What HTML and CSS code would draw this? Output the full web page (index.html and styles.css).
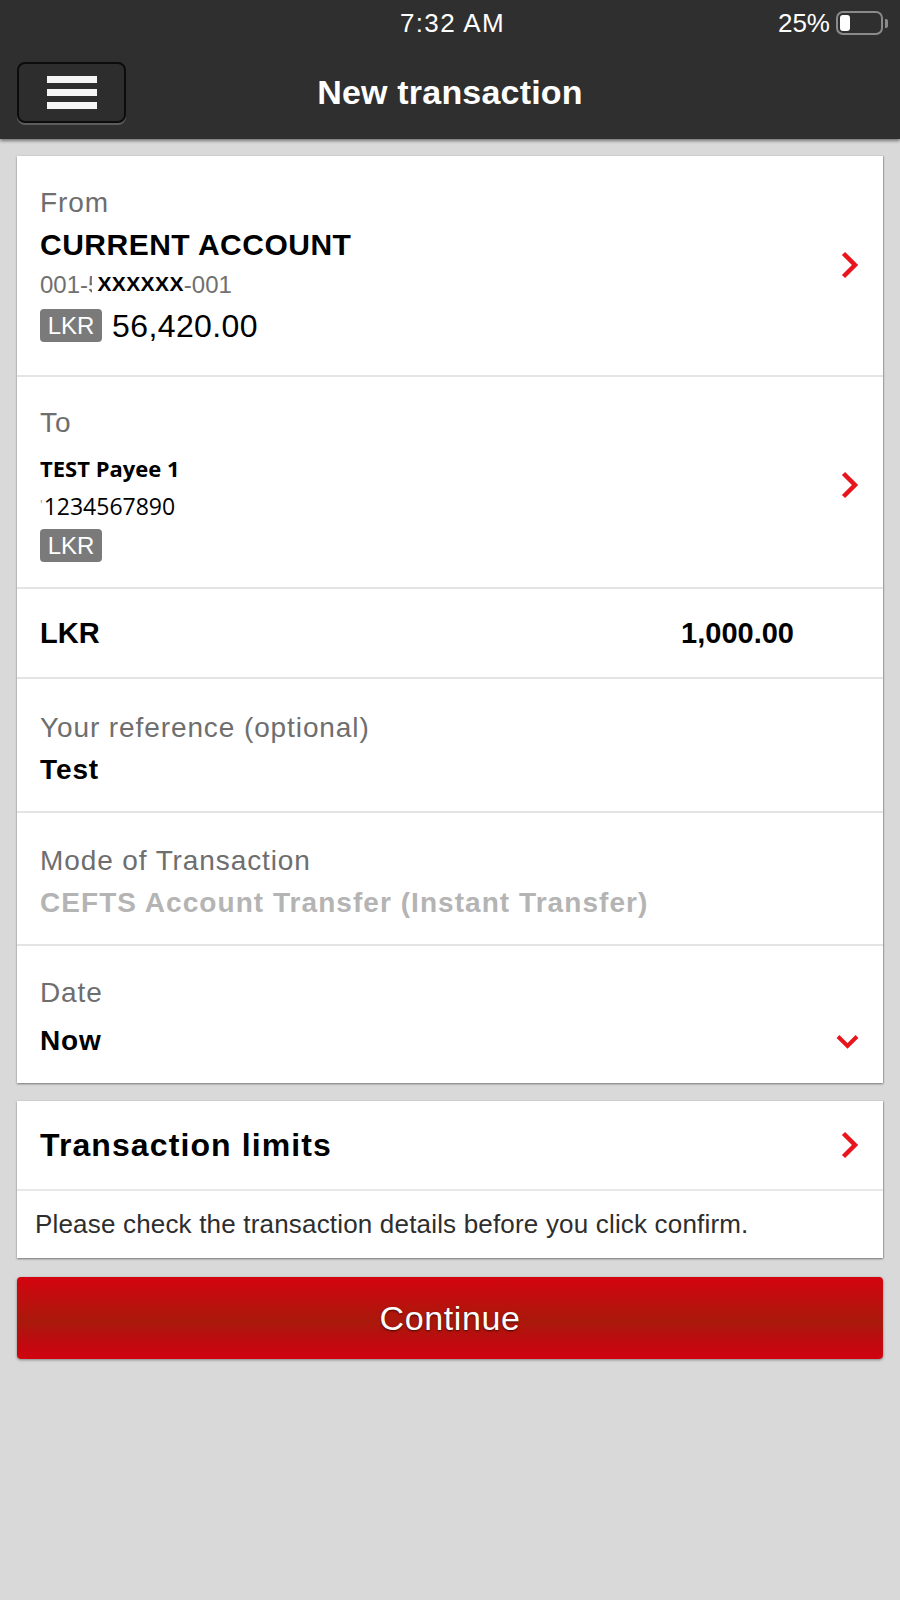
FILE: index.html
```html
<!DOCTYPE html>
<html lang="en">
<head>
<meta charset="utf-8">
<title>New transaction</title>
<link rel="stylesheet" href="styles.css">
</head>
<body>
<header class="topbar">
  <div class="status">
    <span class="status-side"></span>
    <span class="clock">7:32 AM</span>
    <span class="status-side power">
      <span class="pct">25%</span>
      <span class="battery"><span class="level"></span></span>
      <span class="nub"></span>
    </span>
  </div>
  <div class="nav">
    <div class="nav-left">
      <button class="menu-btn" type="button" aria-label="Menu">
        <span></span><span></span><span></span>
      </button>
    </div>
    <h1 class="title">New transaction</h1>
    <div class="nav-right"></div>
  </div>
</header>

<main class="page">
  <section class="card">
    <div class="row row-from">
      <div class="row-body">
        <div class="label">From</div>
        <div class="acct-name">CURRENT ACCOUNT</div>
        <div class="acct-no">001-5<span class="mask">XXXXXX</span>-001</div>
        <div class="balance"><span class="ccy">LKR</span><span class="amount">56,420.00</span></div>
      </div>
      <svg class="chev" width="18" height="28" viewBox="0 0 18 28"><path d="M2.5 2.5 L14 14 L2.5 25.5"/></svg>
    </div>

    <div class="row row-to">
      <div class="row-body">
        <div class="label">To</div>
        <div class="payee">TEST Payee 1</div>
        <div class="payee-no"><span class="tick">'</span>1234567890</div>
        <div class="ccy ccy-solo">LKR</div>
      </div>
      <svg class="chev" width="18" height="28" viewBox="0 0 18 28"><path d="M2.5 2.5 L14 14 L2.5 25.5"/></svg>
    </div>

    <div class="row row-amount">
      <span class="amt-ccy">LKR</span>
      <span class="amt-value">1,000.00</span>
    </div>

    <div class="row row-field row-ref">
      <div class="row-body">
        <div class="label">Your reference (optional)</div>
        <div class="value">Test</div>
      </div>
    </div>

    <div class="row row-field row-mode">
      <div class="row-body">
        <div class="label">Mode of Transaction</div>
        <div class="value value-muted">CEFTS Account Transfer (Instant Transfer)</div>
      </div>
    </div>

    <div class="row row-field row-date">
      <div class="row-body">
        <div class="label">Date</div>
        <div class="date-line">
          <span class="value">Now</span>
          <svg class="chev-down" width="23" height="15" viewBox="0 0 23 15"><path d="M2 2.5 L11.5 12 L21 2.5"/></svg>
        </div>
      </div>
    </div>
  </section>

  <section class="card card-limits">
    <div class="row row-limits">
      <span class="limits-title">Transaction limits</span>
      <svg class="chev" width="18" height="28" viewBox="0 0 18 28"><path d="M2.5 2.5 L14 14 L2.5 25.5"/></svg>
    </div>
    <div class="notice">Please check the transaction details before you click confirm.</div>
  </section>

  <button class="continue" type="button">Continue</button>
</main>
</body>
</html>
```

FILE: styles.css
```css
* {
  box-sizing: border-box;
}

html,
body {
  margin: 0;
  padding: 0;
}

body {
  min-height: 1600px;
  background: #d9d9d9;
  font-family: "Liberation Sans", Arial, Helvetica, sans-serif;
  color: #000;
}

/* ---------- top bar ---------- */
.topbar {
  background: #2f2f2f;
  box-shadow: 0 2px 3px rgba(0, 0, 0, 0.45);
  position: relative;
  z-index: 1;
}

.status {
  height: 46px;
  display: grid;
  grid-template-columns: 1fr auto 1fr;
  align-items: center;
  padding: 0 12px 0 17px;
  color: #fff;
  font-size: 26px;
  line-height: 46px;
}

.clock {
  letter-spacing: 1.4px;
}

.power {
  display: flex;
  justify-content: flex-end;
  align-items: center;
}

.pct {
  margin-right: 6px;
}

.battery {
  width: 47px;
  height: 24px;
  border: 2px solid #8a8a8a;
  border-radius: 7px;
  padding: 2px;
  display: flex;
}

.level {
  width: 10px;
  height: 16px;
  background: #fff;
  border-radius: 3px;
}

.nub {
  width: 3px;
  height: 9px;
  margin-left: 2px;
  background: #8a8a8a;
  border-radius: 0 2px 2px 0;
}

.nav {
  height: 93px;
  display: grid;
  grid-template-columns: 1fr auto 1fr;
  align-items: center;
  padding: 0 17px;
}

.menu-btn {
  width: 109px;
  height: 61px;
  margin: 0;
  padding: 0;
  border: 2px solid #0c0c0c;
  border-radius: 8px;
  background: #2d2d2d;
  box-shadow: 0 2px 0 #5c5c5c;
  display: flex;
  flex-direction: column;
  align-items: center;
  justify-content: center;
  gap: 6px;
}

.menu-btn span {
  display: block;
  width: 50px;
  height: 7px;
  background: #f5f5f5;
}

.title {
  margin: 0;
  color: #fff;
  font-size: 34px;
  font-weight: 700;
  line-height: 93px;
  letter-spacing: 0.2px;
}

/* ---------- content ---------- */
.page {
  padding: 17px;
}

.card {
  background: #fff;
  box-shadow: 0 1px 2px rgba(0, 0, 0, 0.45), 1px 0 1px rgba(0, 0, 0, 0.12);
}

.row {
  display: flex;
  align-items: center;
  justify-content: space-between;
  padding: 0 24px 0 23px;
  border-bottom: 2px solid #e4e4e4;
}

.row-body {
  flex: 1;
}

.chev {
  flex: none;
  display: block;
}

.chev path,
.chev-down path {
  fill: none;
  stroke: #e8151d;
  stroke-width: 4.5;
  stroke-linejoin: miter;
}

.chev-down path {
  stroke-width: 4;
}

.label {
  color: #6e6e6e;
  font-size: 28px;
  line-height: 32px;
  letter-spacing: 0.9px;
}

/* From */
.row-from {
  padding-top: 31px;
  padding-bottom: 33px;
}

.acct-name {
  margin-top: 8px;
  font-size: 30px;
  font-weight: 700;
  line-height: 36px;
  letter-spacing: 0.5px;
}

.acct-no {
  margin-top: 6px;
  color: #707070;
  font-size: 24px;
  line-height: 30px;
}

.mask {
  display: inline-block;
  margin-left: -9px;
  padding-left: 5px;
  background: #fff;
  color: #000;
  font-size: 21px;
  font-weight: 700;
  line-height: 30px;
  vertical-align: 2px;
  letter-spacing: 0.4px;
}

.balance {
  margin-top: 9px;
  display: flex;
  align-items: center;
  height: 33px;
}

.ccy {
  display: flex;
  align-items: center;
  justify-content: center;
  width: 62px;
  height: 33px;
  background: #7a7a7a;
  border-radius: 4px;
  color: #fff;
  font-size: 24px;
}

.amount {
  margin-left: 10px;
  font-size: 32px;
  line-height: 32px;
  letter-spacing: 0.4px;
}

/* To */
.row-to {
  padding-top: 30px;
  padding-bottom: 25px;
}

.payee {
  margin-top: 14px;
  font-family: "Open Sans", "Noto Sans", sans-serif;
  font-size: 22px;
  font-weight: 700;
  line-height: 30px;
}

.payee-no {
  margin-top: 7px;
  font-family: "Open Sans", "Noto Sans", sans-serif;
  font-size: 23px;
  line-height: 30px;
}

.tick {
  color: #9a9a9a;
  font-size: 12px;
  margin-right: 1px;
  vertical-align: 6px;
}

.ccy-solo {
  margin-top: 8px;
}

/* Amount */
.row-amount {
  height: 90px;
  padding-right: 89px;
  font-size: 29px;
  font-weight: 700;
}

/* Plain fields */
.value {
  font-size: 28px;
  font-weight: 700;
  line-height: 32px;
  letter-spacing: 0.9px;
}

.value-muted {
  color: #b4b4b4;
  letter-spacing: 1.05px;
}

.row-ref {
  padding-top: 33px;
  padding-bottom: 25px;
}

.row-ref .value,
.row-mode .value {
  margin-top: 10px;
}

.row-mode {
  padding-top: 32px;
  padding-bottom: 25px;
}

.row-date {
  padding-top: 31px;
  padding-bottom: 26px;
  border-bottom: 0;
}

.date-line {
  margin-top: 16px;
  display: flex;
  align-items: center;
  justify-content: space-between;
}

.chev-down {
  display: block;
  flex: none;
}

/* Limits card */
.card-limits {
  margin-top: 18px;
}

.row-limits {
  height: 90px;
  border-bottom-color: #e8e8e8;
}

.limits-title {
  font-size: 32px;
  font-weight: 700;
  letter-spacing: 1.1px;
}

.notice {
  height: 67px;
  display: flex;
  align-items: center;
  padding-left: 18px;
  color: #2e2e2e;
  font-size: 26px;
  letter-spacing: 0.18px;
}

/* Continue */
.continue {
  display: block;
  width: 100%;
  height: 82px;
  margin: 19px 0 0;
  padding: 0;
  border: 0;
  border-radius: 4px;
  background: linear-gradient(#d4030f 0%, #b8120d 35%, #a9190b 55%, #c00910 80%, #d0040f 100%);
  box-shadow: 0 1px 3px rgba(0, 0, 0, 0.4);
  color: #fff;
  font-family: "Liberation Sans", Arial, Helvetica, sans-serif;
  font-size: 34px;
  letter-spacing: 0.6px;
  text-shadow: 0 1px 2px rgba(0, 0, 0, 0.65);
}
```
